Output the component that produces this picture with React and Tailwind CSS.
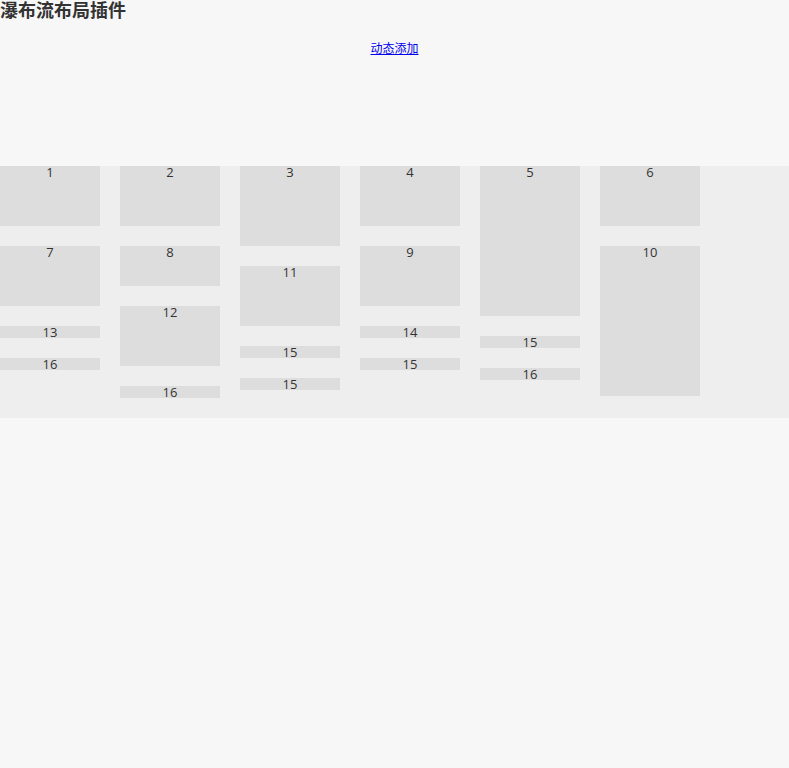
import React from 'react';

const columns = [
  [{ n: 1, h: 60 }, { n: 7, h: 60 }, { n: 13, h: 12 }, { n: 16, h: 12 }],
  [{ n: 2, h: 60 }, { n: 8, h: 40 }, { n: 12, h: 60 }, { n: 16, h: 12 }],
  [{ n: 3, h: 80 }, { n: 11, h: 60 }, { n: 15, h: 12 }, { n: 15, h: 12 }],
  [{ n: 4, h: 60 }, { n: 9, h: 60 }, { n: 14, h: 12 }, { n: 15, h: 12 }],
  [{ n: 5, h: 150 }, { n: 15, h: 12 }, { n: 16, h: 12 }],
  [{ n: 6, h: 60 }, { n: 10, h: 150 }],
];

const Box = ({ n, h }) => (
  <div
    className="w-[100px] bg-[#dddddd] text-center text-[13px] leading-[13px] text-[#333] overflow-visible"
    style={{ height: h }}
  >
    {n}
  </div>
);

export default function App() {
  return (
    <div className="min-h-[768px] bg-[#f7f7f7] font-['Open_Sans','Noto_Sans_CJK_SC',sans-serif]">
      <h3 className="h-[22px] text-[18px] leading-[20px] font-bold text-[#333]">瀑布流布局插件</h3>
      <div className="mt-[19px] text-center text-[12px] leading-[16px]">
        <a href="#" className="text-[#0000ee] underline">动态添加</a>
      </div>
      <div className="mt-[109px] bg-[#eeeeee] flex gap-[20px] pb-[20px]">
        {columns.map((col, i) => (
          <div key={i} className="flex flex-col gap-[20px]">
            {col.map((it, j) => (
              <Box key={j} n={it.n} h={it.h} />
            ))}
          </div>
        ))}
      </div>
    </div>
  );
}
